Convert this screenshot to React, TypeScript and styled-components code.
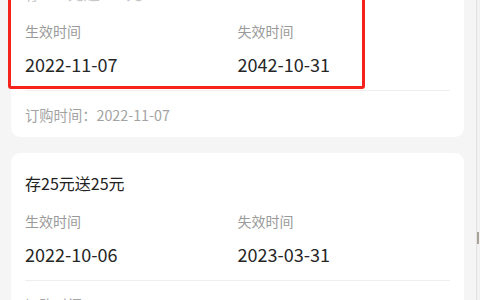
import React from "react";
import styled, { createGlobalStyle } from "styled-components";

const GlobalStyle = createGlobalStyle`
  html, body {
    margin: 0;
    padding: 0;
    background: #f5f5f5;
    overflow: hidden;
  }
  body {
    font-family: "Noto Sans CJK SC", "Noto Sans", sans-serif;
    -webkit-font-smoothing: antialiased;
  }
`;

const Screen = styled.div`
  display: flex;
  width: 480px;
  height: 300px;
  overflow: hidden;
  background: #f5f5f5;
`;

const Feed = styled.div`
  flex: 1;
  display: flex;
  flex-direction: column;
  gap: 16px;
  padding: 0 12px 0 11px;
  margin-top: -37px;
`;

const EdgeStrip = styled.div`
  width: 3px;
  border-left: 1px solid #e2e2e2;
  background: #f2f2f2;
  display: flex;
  flex-direction: column;
  padding-top: 232px;
`;

const EdgeMark = styled.div`
  width: 2px;
  height: 12px;
  background: #a9a39a;
`;

const Card = styled.div`
  position: relative;
  background: #ffffff;
  border-radius: 9px;
  padding: 18px 14px 12px;
`;

const Highlight = styled.div`
  position: absolute;
  left: -3px;
  top: -6px;
  width: 357px;
  height: 132px;
  box-sizing: border-box;
  border: 3px solid #f5231c;
  border-radius: 3px;
  pointer-events: none;
`;

const Title = styled.div<{ $faded?: boolean }>`
  font-size: 16px;
  line-height: 24px;
  color: ${(p) => (p.$faded ? "#c8c8c8" : "#222222")};
`;

const Grid = styled.div`
  display: grid;
  grid-template-columns: 1fr 1fr;
  margin-top: 16px;
  row-gap: 10px;
`;

const Label = styled.div`
  font-size: 14px;
  line-height: 20px;
  color: #9a9a9a;
`;

const DateValue = styled.div`
  font-size: 18px;
  line-height: 26px;
  color: #262626;
`;

const Divider = styled.div`
  height: 1px;
  background: #eeeeee;
  margin-top: 13px;
`;

const OrderTime = styled.div`
  font-size: 14.3px;
  line-height: 20px;
  color: #a3a3a3;
  margin-top: 14px;
`;

type Plan = {
  title: string;
  start: string;
  end: string;
  ordered: string;
  highlighted?: boolean;
};

const plans: Plan[] = [
  {
    title: "存100元送100元",
    start: "2022-11-07",
    end: "2042-10-31",
    ordered: "2022-11-07",
    highlighted: true,
  },
  {
    title: "存25元送25元",
    start: "2022-10-06",
    end: "2023-03-31",
    ordered: "2022-10-06",
  },
];

function PlanCard({ plan }: { plan: Plan }) {
  return (
    <Card>
      {plan.highlighted && <Highlight />}
      <Title $faded={plan.highlighted}>{plan.title}</Title>
      <Grid>
        <Label>生效时间</Label>
        <Label>失效时间</Label>
        <DateValue>{plan.start}</DateValue>
        <DateValue>{plan.end}</DateValue>
      </Grid>
      <Divider />
      <OrderTime>订购时间：{plan.ordered}</OrderTime>
    </Card>
  );
}

export default function App() {
  return (
    <>
      <GlobalStyle />
      <Screen>
        <Feed>
          {plans.map((p) => (
            <PlanCard key={p.title} plan={p} />
          ))}
        </Feed>
        <EdgeStrip>
          <EdgeMark />
        </EdgeStrip>
      </Screen>
    </>
  );
}
